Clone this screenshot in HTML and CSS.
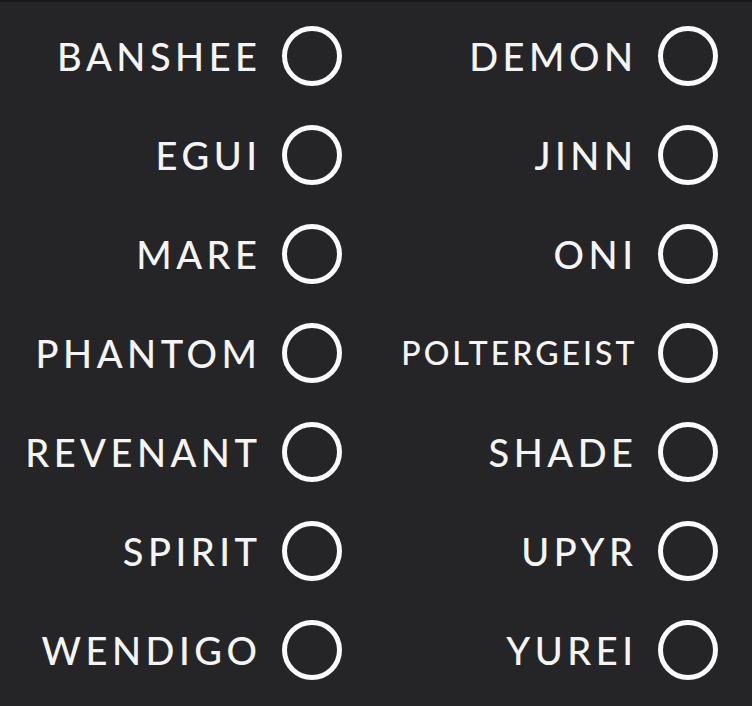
FILE: index.html
```html
<!DOCTYPE html>
<html lang="en">
<head>
<meta charset="utf-8">
<title>Ghost types</title>
<link rel="stylesheet" href="styles.css">
</head>
<body>
<main class="ghost-list">
  <label class="ghost"><span class="ghost-name">BANSHEE</span><span class="ghost-check"></span></label>
  <label class="ghost"><span class="ghost-name">DEMON</span><span class="ghost-check"></span></label>
  <label class="ghost"><span class="ghost-name">EGUI</span><span class="ghost-check"></span></label>
  <label class="ghost"><span class="ghost-name">JINN</span><span class="ghost-check"></span></label>
  <label class="ghost"><span class="ghost-name">MARE</span><span class="ghost-check"></span></label>
  <label class="ghost"><span class="ghost-name">ONI</span><span class="ghost-check"></span></label>
  <label class="ghost"><span class="ghost-name">PHANTOM</span><span class="ghost-check"></span></label>
  <label class="ghost"><span class="ghost-name ghost-name-long">POLTERGEIST</span><span class="ghost-check"></span></label>
  <label class="ghost"><span class="ghost-name">REVENANT</span><span class="ghost-check"></span></label>
  <label class="ghost"><span class="ghost-name">SHADE</span><span class="ghost-check"></span></label>
  <label class="ghost"><span class="ghost-name">SPIRIT</span><span class="ghost-check"></span></label>
  <label class="ghost"><span class="ghost-name">UPYR</span><span class="ghost-check"></span></label>
  <label class="ghost"><span class="ghost-name">WENDIGO</span><span class="ghost-check"></span></label>
  <label class="ghost"><span class="ghost-name">YUREI</span><span class="ghost-check"></span></label>
</main>
</body>
</html>
```

FILE: styles.css
```css
html, body {
  margin: 0;
  height: 100%;
}

body {
  background: #252427;
  border-top: 2px solid #19181b;
  box-sizing: border-box;
  color: #f4f4f4;
  font-family: "Lato", "DejaVu Sans", sans-serif;
}

.ghost-list {
  display: grid;
  grid-template-columns: 376px 376px;
  grid-auto-rows: 99px;
  padding-top: 4px;
}

.ghost {
  display: flex;
  align-items: center;
  justify-content: flex-end;
  gap: 20.5px;
  padding-right: 34px;
}

.ghost-name {
  font-size: 38px;
  font-weight: 500;
  letter-spacing: 4.5px;
  line-height: 1;
  white-space: nowrap;
}

.ghost-name-long {
  font-size: 32px;
  letter-spacing: 3px;
}

.ghost-check {
  flex: none;
  width: 60px;
  height: 60px;
  box-sizing: border-box;
  border: 5px solid #fafafa;
  border-radius: 50%;
}
```
